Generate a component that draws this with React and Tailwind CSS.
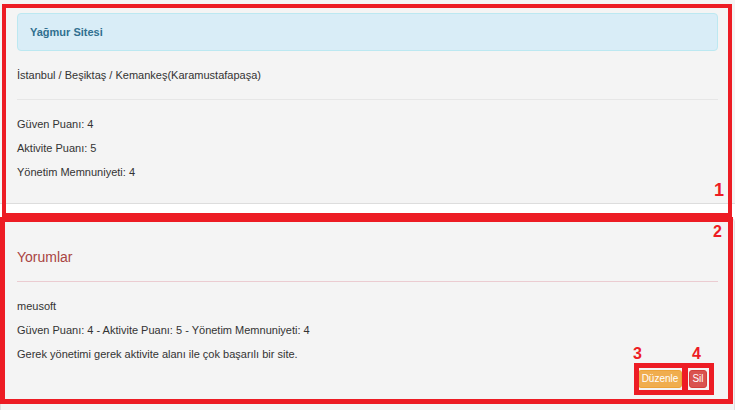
import React from "react";

export default function App() {
  const font = { fontFamily: '"Liberation Sans", Arial, sans-serif' };
  return (
    <div className="relative w-[739px] h-[410px] overflow-hidden bg-white text-[#333]" style={font}>
      {/* Panel 1 */}
      <div className="w-[735px] h-[204px] bg-[#f4f4f4] border-b border-[#dddddd] px-[17px] pt-[13px]">
        <div className="h-[38px] flex items-center rounded-[4px] border border-[#bce8f1] bg-[#d9edf7] pl-[12px] text-[11px] font-bold text-[#31708f]">
          Yağmur Sitesi
        </div>
        <div className="mt-[16px] text-[11px] leading-[16px]">İstanbul / Beşiktaş / Kemankeş(Karamustafapaşa)</div>
        <div className="mt-[16px] h-px bg-[#e6e6e6]" />
        <div className="mt-[16px] flex flex-col gap-[8px] text-[11px] leading-[16px]">
          <div>Güven Puanı: 4</div>
          <div>Aktivite Puanı: 5</div>
          <div>Yönetim Memnuniyeti: 4</div>
        </div>
      </div>

      {/* Panel 2 */}
      <div className="mt-[14px] w-[735px] h-[220px] bg-[#f4f4f4] border border-[#e0e0e0] rounded-[4px] px-[16px] pt-[28px]">
        <div className="text-[14px] leading-[20px] text-[#a94442]">Yorumlar</div>
        <div className="mt-[14px] h-px bg-[#ebccd1]" />
        <div className="mt-[16px] flex flex-col gap-[8px] text-[11px] leading-[16px]">
          <div>meusoft</div>
          <div>Güven Puanı: 4 - Aktivite Puanı: 5 - Yönetim Memnuniyeti: 4</div>
          <div>Gerek yönetimi gerek aktivite alanı ile çok başarılı bir site.</div>
        </div>
        <div className="mt-[8px] flex justify-end gap-[7px] pr-[11px]">
          <button className="h-[18px] w-[44px] rounded-[3px] border border-[#eea236] bg-[#f0ad4e] text-[10px] leading-none text-white">
            Düzenle
          </button>
          <button className="h-[18px] w-[18px] rounded-[3px] border border-[#d43f3a] bg-[#d9534f] text-[10px] leading-none text-white">
            Sil
          </button>
        </div>
      </div>

      {/* Annotations */}
      <div className="absolute left-[2px] top-[4px] w-[730px] h-[213px] border-[4px] border-[#ed1c24] pointer-events-none" />
      <div className="absolute left-0 top-[217px] w-[733px] h-[187px] border-[5px] border-[#ed1c24] pointer-events-none" />
      <div className="absolute left-[634px] top-[363px] w-[53px] h-[32px] border-[5px] border-[#ed1c24] pointer-events-none" />
      <div className="absolute left-[683px] top-[363px] w-[31px] h-[32px] border-[5px] border-[#ed1c24] pointer-events-none" />
      <div className="absolute left-[714px] top-[181px] text-[18px] leading-[18px] font-bold text-[#ed1c24]">1</div>
      <div className="absolute left-[713px] top-[224px] text-[16px] leading-[16px] font-bold text-[#ed1c24]">2</div>
      <div className="absolute left-[633px] top-[346px] text-[16px] leading-[16px] font-bold text-[#ed1c24]">3</div>
      <div className="absolute left-[692px] top-[346px] text-[16px] leading-[16px] font-bold text-[#ed1c24]">4</div>
    </div>
  );
}
